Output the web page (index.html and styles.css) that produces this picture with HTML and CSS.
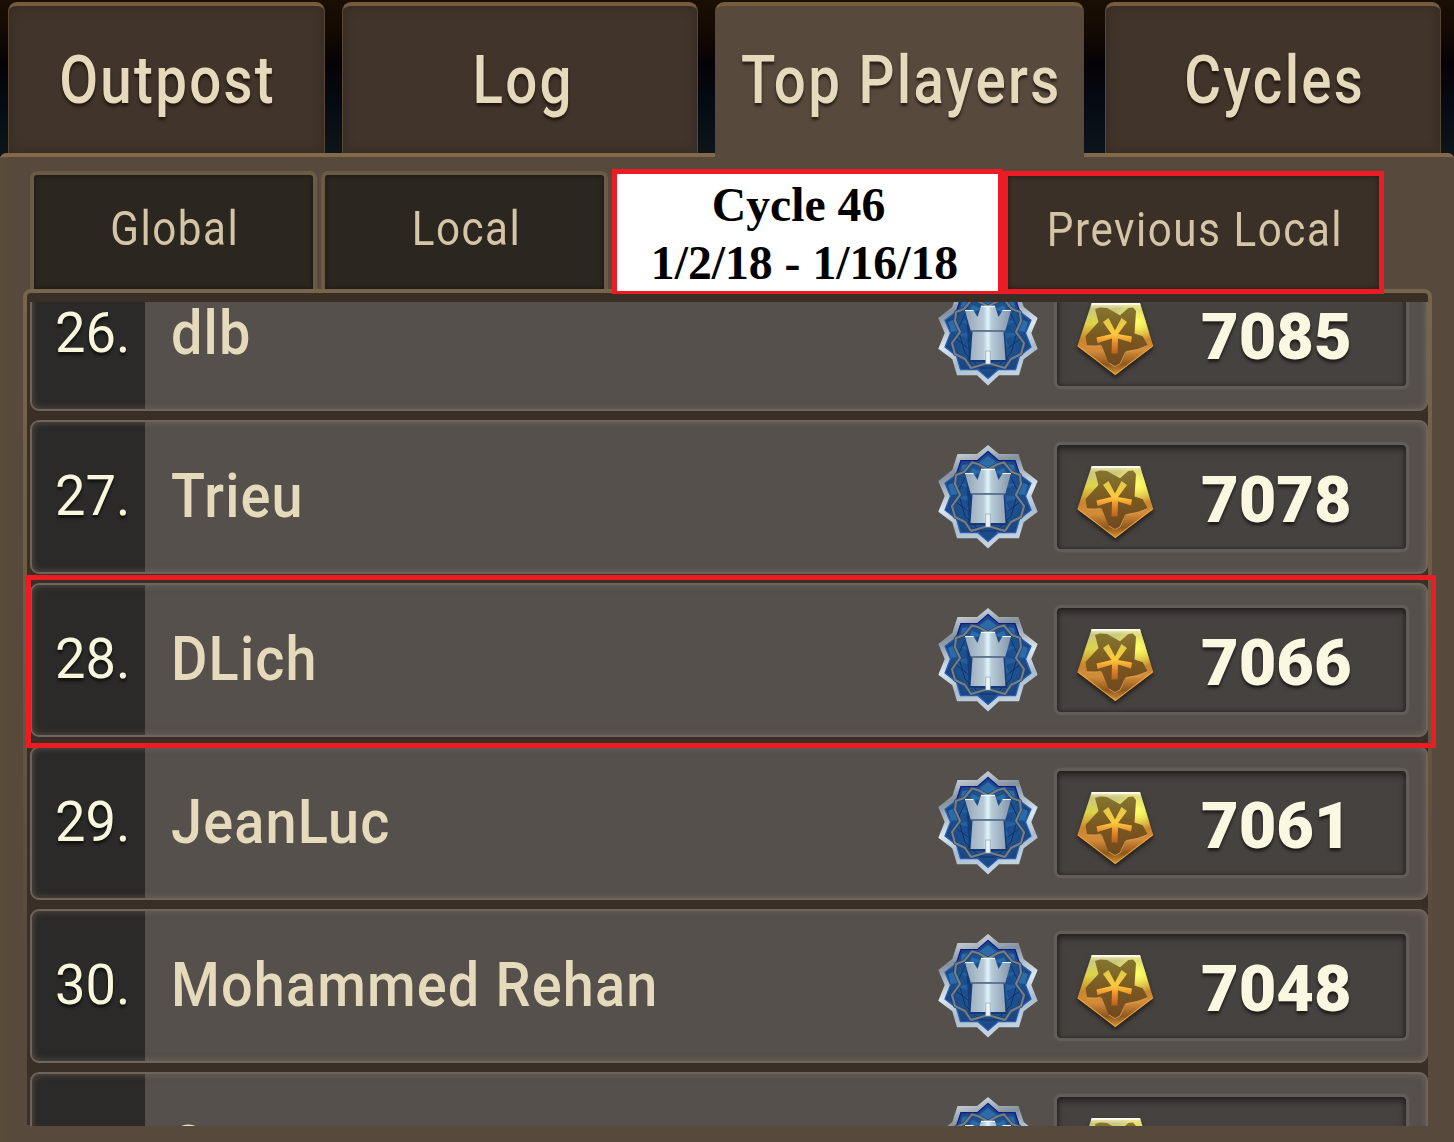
FILE: index.html
```html
<!DOCTYPE html>
<html lang="en">
<head>
  <meta charset="UTF-8">
  <meta name="viewport" content="width=device-width, initial-scale=1.0">
  <title>Top Players</title>
  <link rel="stylesheet" href="styles.css">
</head>
<body>
  <!-- Shared icons -->
  <svg class="icon-defs" width="0" height="0" aria-hidden="true">
    <defs>
      <linearGradient id="steel" x1="0" y1="0" x2="0.25" y2="1">
        <stop offset="0" stop-color="#f2f8fb"/>
        <stop offset="0.3" stop-color="#84929d"/>
        <stop offset="0.6" stop-color="#dce8f0"/>
        <stop offset="0.8" stop-color="#a9bccb"/>
        <stop offset="1" stop-color="#c3d2de"/>
      </linearGradient>
      <radialGradient id="blue" cx="0.5" cy="0.5" r="0.6">
        <stop offset="0" stop-color="#163a80"/>
        <stop offset="0.55" stop-color="#1d5390"/>
        <stop offset="1" stop-color="#183c78"/>
      </radialGradient>
      <linearGradient id="rook" x1="0" y1="0" x2="1" y2="0">
        <stop offset="0" stop-color="#93a4b5"/>
        <stop offset="0.4" stop-color="#b9cad7"/>
        <stop offset="0.5" stop-color="#dff6ff"/>
        <stop offset="0.58" stop-color="#b7cad7"/>
        <stop offset="1" stop-color="#8496aa"/>
      </linearGradient>
      <linearGradient id="gold" x1="0" y1="0" x2="0" y2="1">
        <stop offset="0" stop-color="#f4f1c0"/>
        <stop offset="0.08" stop-color="#cbc680"/>
        <stop offset="0.28" stop-color="#ddd548"/>
        <stop offset="0.5" stop-color="#c9862a"/>
        <stop offset="0.66" stop-color="#d58c3a"/>
        <stop offset="0.85" stop-color="#8e571c"/>
        <stop offset="1" stop-color="#d99a35"/>
      </linearGradient>
      <radialGradient id="shine" cx="0.78" cy="0.25" r="0.3">
        <stop offset="0" stop-color="#ffff6a"/>
        <stop offset="1" stop-color="#ffff6a" stop-opacity="0"/>
      </radialGradient>
      <linearGradient id="leaf" x1="0" y1="0" x2="0" y2="1">
        <stop offset="0" stop-color="#85762f"/>
        <stop offset="0.5" stop-color="#7a5820"/>
        <stop offset="1" stop-color="#71481f"/>
      </linearGradient>
      <linearGradient id="spark" x1="0" y1="0" x2="0" y2="1">
        <stop offset="0" stop-color="#dccb4a"/>
        <stop offset="0.45" stop-color="#ffc93c"/>
        <stop offset="0.7" stop-color="#e88a2c"/>
        <stop offset="1" stop-color="#b8621c"/>
      </linearGradient>
    </defs>
    <symbol id="badge" viewBox="0 0 100 104">
      <path fill="url(#steel)" d="M50 0L61 9H80.500L85.700 25L99.700 36L93.300 51L99.700 66.700L85.700 77.300L81 93.300H61L50 103.500L39 93.300H19L14.300 77.300L.3 66.700L6.700 51L.3 36L14.300 25L19.500 9H39Z"/>
      <path fill="url(#blue)" stroke="#2a5cb8" stroke-width="1.300" d="M50 6.500L60.500 15.700H77L81.500 29.500L93 38.300L87.500 51L93 65L81.500 74L77.500 87.700H60L50 96.500L40 87.700H22.500L18.500 74L7 65L12.500 51L7 38.300L18.500 29.500L23 15.700H39.500Z"/>
      <path fill="none" stroke="#101a86" stroke-width="1.200" d="M18.500 29.500L23 15.700H39.500L50 6.500L60.500 15.700H77L81.500 29.500"/>
      <path fill="#2b6ca8" d="M50 11L59 18L50 23L41 18ZM24 20L33 19L22 31ZM76 20L67 19L78 31ZM10 40L17 37L20 49L13 50ZM90 40L83 37L80 49L87 50ZM34 23L43 27L30 33ZM66 23L57 27L70 33Z"/>
      <path fill="#2f6fae" opacity="0.500" d="M21 39L35 45L33 50L18 52L32 57L28 67L35 62L65 62L72 67L68 57L82 52L67 50L65 45L79 39L62 38H38Z"/>
      <path fill="none" stroke="#122f6c" stroke-width="1" d="M28 30L20 47L27 71L42 86L58 86L73 71L80 47L72 30M30 77L43 72M70 77L57 72M18 57L30 66M82 57L70 66"/>
      <path fill="none" stroke="#2c4264" stroke-width="3.500" stroke-linejoin="round" d="M50 24.500L40 19L34 17.500L26 27L18 30L17 39L22 50L14 61L17 72L27 77L33 86L50 81L67 86L73 77L83 72L86 61L78 50L83 39L82 30L74 27L66 17.500L60 19Z"/>
      <path fill="none" stroke="#727f8c" stroke-width="2.100" stroke-linejoin="round" d="M50 24.500L40 19L34 17.500L26 27L18 30L17 39L22 50L14 61L17 72L27 77L33 86L50 81L67 86L73 77L83 72L86 61L78 50L83 39L82 30L74 27L66 17.500L60 19Z"/>
      <path fill="#12316f" opacity="0.700" d="M28 29L67 50L69 80H31Z"/>
      <path fill="url(#rook)" d="M27 28.500H35.500L39.500 35L43 24.300H57L60.500 35L64.500 28.500H73L67.500 48H32.500ZM34.500 49.500H65.500L67.500 78H32.500Z"/>
      <path stroke="#eff8fc" stroke-width="1.200" fill="none" d="M27 28.500H35.500M43 24.300H57M64.500 28.500H73"/>
      <path stroke="#60758a" stroke-width="1.400" fill="none" d="M32.500 48.800H67.500"/>
      <path fill="#eef5f9" stroke="#8da0b0" stroke-width="0.700" d="M47.700 69H52.300V82H47.700Z"/>
    </symbol>
    <symbol id="gem" viewBox="0 0 77 74">
      <path fill="url(#gold)" d="M14.700 0H63L76.300 43.300L38.300 72.300L.3 43.300Z"/>
      <path fill="url(#shine)" d="M14.700 0H63L76.300 43.300L38.300 72.300L.3 43.300Z"/>
      <path fill="#fff" opacity="0.750" d="M14.700 0H63L63.500 2H14.200Z"/>
      <path fill="none" stroke="#e9aa45" stroke-width="1" d="M1 43L38.300 71.300L75.500 43"/>
      <path fill="url(#leaf)" d="M18 6L23 4.500L30 5L43 12.300L51.300 5L56 4.500L59 8L57.500 30.500L65.700 33.300L70.700 42.300L60 46L49.700 48L43 60.700L38 63.500L31.300 59L24.700 42.500L10 42.300L8.500 33L21.500 19Z"/>
      <path fill="none" stroke="#d09a52" stroke-width="0.900" d="M9 43L18 44L23.500 42M32 60L38 63.500L43 61L48.500 49L61 47L70.700 42.500"/>
      <path fill="url(#spark)" d="M26 19L31.500 15L38 27.500L44.500 15L50 19L41 31L55 33.500L54 39.500L41 35.500L40.500 50.500H34.500L35 35.500L20.500 40L19.500 34.500L34.500 31Z"/>
    </symbol>
  </svg>

  <div class="screen">
    <!-- Main tabs -->
    <nav class="tabs">
      <div class="tab tab-outpost"><span>Outpost</span></div>
      <div class="tab tab-log"><span>Log</span></div>
      <div class="tab tab-players active"><span>Top Players</span></div>
      <div class="tab tab-cycles"><span>Cycles</span></div>
    </nav>

    <main class="panel">
      <!-- Leaderboard filter -->
      <div class="subtabs">
        <div class="subtab"><span>Global</span></div>
        <div class="subtab"><span>Local</span></div>
        <div class="cycle-note">Cycle 46&nbsp;<br>1/2/18 - 1/16/18</div>
        <div class="subtab previous"><span>Previous Local</span></div>
      </div>

      <!-- Player list -->
      <section class="board">
        <div class="list">
          <div class="row">
            <div class="rank">26.</div>
            <div class="name">dlb</div>
            <svg class="badge"><use href="#badge"/></svg>
            <div class="score"><svg class="gem"><use href="#gem"/></svg><span>7085</span></div>
          </div>
          <div class="row">
            <div class="rank">27.</div>
            <div class="name">Trieu</div>
            <svg class="badge"><use href="#badge"/></svg>
            <div class="score"><svg class="gem"><use href="#gem"/></svg><span>7078</span></div>
          </div>
          <div class="row selected">
            <div class="rank">28.</div>
            <div class="name">DLich</div>
            <svg class="badge"><use href="#badge"/></svg>
            <div class="score"><svg class="gem"><use href="#gem"/></svg><span>7066</span></div>
          </div>
          <div class="row">
            <div class="rank">29.</div>
            <div class="name">JeanLuc</div>
            <svg class="badge"><use href="#badge"/></svg>
            <div class="score"><svg class="gem"><use href="#gem"/></svg><span>7061</span></div>
          </div>
          <div class="row">
            <div class="rank">30.</div>
            <div class="name">Mohammed Rehan</div>
            <svg class="badge"><use href="#badge"/></svg>
            <div class="score"><svg class="gem"><use href="#gem"/></svg><span>7048</span></div>
          </div>
          <div class="row">
            <div class="rank">31.</div>
            <div class="name">S</div>
            <svg class="badge"><use href="#badge"/></svg>
            <div class="score"><svg class="gem"><use href="#gem"/></svg><span>7047</span></div>
          </div>
        </div>
      </section>
    </main>
  </div>
</body>
</html>
```
FILE: styles.css
```css
* {
  box-sizing: border-box;
}
body {
  margin: 0;
  background: #574a3d;
  font-family: Roboto, "Liberation Sans", sans-serif;
  color: #e6dabc;
}
.icon-defs {
  position: absolute;
}
.screen {
  width: 1454px;
  height: 1142px;
  overflow: hidden;
  display: flex;
  flex-direction: column;
  background: linear-gradient(#1a0f04 0, #150a03 30px, #060206 62px, #050a12 100px, #0c151a 153px);
}

/* Main tabs */
.tabs {
  display: flex;
  height: 153px;
  padding: 2px 13px 0 8px;
}
.tab {
  display: flex;
  justify-content: center;
  height: 151px;
  border: 1px solid #59482f;
  border-top: 4px solid #765b3d;
  border-bottom: 0;
  border-radius: 9px 9px 0 0;
  background: #40342b;
  box-shadow: inset 0 0 12px rgba(20, 14, 8, 0.25);
  font-size: 66px;
  font-weight: 500;
  letter-spacing: 2.7px;
  line-height: 150px;
  text-shadow: 0 3px 3px rgba(20, 12, 6, 0.7);
  white-space: nowrap;
}
.tab-outpost {
  width: 317px;
  margin-right: 17px;
}
.tab-log {
  width: 356px;
  margin-right: 17px;
  padding-left: 4px;
}
.tab-players {
  width: 369px;
  margin-right: 21px;
}
.tab-cycles {
  width: 336px;
}
.tab.active {
  height: 156px;
  position: relative;
  z-index: 1;
  background: #574a3d;
  box-shadow: none;
}
.tab span {
  padding-left: 3px;
  transform: scaleX(0.855);
}

/* Panel */
.panel {
  height: 989px;
  padding: 12px 22px 0 23px;
  border-top: 4px solid #836849;
  border-radius: 6px 6px 0 0;
  background: #574a3d;
  box-shadow: inset 8px 0 8px -6px rgba(110, 88, 55, 0.35);
}
.subtabs {
  display: flex;
  align-items: flex-start;
  height: 120px;
  padding: 2px 0 0 7px;
}
.subtab {
  display: flex;
  justify-content: center;
  width: 287px;
  height: 118px;
  margin-right: 4px;
  border: 4px solid #6b5b44;
  border-bottom: 0;
  border-radius: 7px 7px 0 0;
  background: #2c2620;
  box-shadow: inset 0 0 5px rgba(10, 8, 5, 0.6);
  color: #d3c5a5;
  font-size: 49px;
  font-weight: 400;
  letter-spacing: 1.8px;
  line-height: 108px;
  white-space: nowrap;
}
.subtab span {
  padding-left: 4px;
  transform: scaleX(0.86);
}
.cycle-note {
  position: relative;
  z-index: 2;
  width: 391px;
  height: 125px;
  margin-top: -2px;
  padding: 2px 6px 0 0;
  border: 5px solid #ed1c24;
  border-bottom-width: 3px;
  background: #fff;
  color: #000;
  font-family: "Liberation Serif", serif;
  font-size: 47.7px;
  font-weight: bold;
  line-height: 58px;
  text-align: center;
  white-space: nowrap;
}
.subtab.previous {
  position: relative;
  z-index: 2;
  width: 381px;
  height: 123px;
  margin-right: 0;
  border: 5px solid #ed1c24;
  border-radius: 0;
  background: #3b3028;
}

/* Player list, the frame fades out towards the bottom */
.board {
  height: 836px;
  padding: 9px 0 0 3px;
  border: 4px solid transparent;
  border-bottom: 0;
  border-radius: 8px 8px 0 0;
  background:
    linear-gradient(#3a2f27, #3a2f27) padding-box,
    linear-gradient(#75664c, #6a5b45 40%, #574a3d 80%) border-box;
}
/* Rows are cut at the top and bottom only */
.list {
  display: flow-root;
  height: 824px;
  width: 1398px;
  clip-path: inset(0 -10px);
}
.row {
  position: relative;
  display: flex;
  align-items: center;
  width: 1398px;
  height: 154px;
  margin-bottom: 9px;
  border-radius: 9px;
  background: linear-gradient(to right, #2b2a28 115px, #55504c 115px);
}
.row:first-child {
  margin-top: -45px;
}
.row::after {
  content: "";
  position: absolute;
  inset: 0;
  border: 2px solid #6f635a;
  border-radius: 9px;
  box-shadow: inset 0 0 7px rgba(140, 122, 108, 0.5);
}
.rank {
  width: 115px;
  padding: 0 0 2px 25px;
  color: #f8f6dc;
  font-size: 56px;
  text-shadow: 0 3px 3px #111;
  transform: scaleX(0.97);
  transform-origin: 25px 0;
}
.name {
  flex: 1;
  padding: 0 0 4px 26px;
  font-size: 62px;
  font-weight: 500;
  letter-spacing: 1.3px;
  transform: scaleX(0.9);
  transform-origin: 26px 0;
  white-space: nowrap;
}
.badge {
  width: 100px;
  height: 104px;
  margin-right: 16px;
}
.score {
  display: flex;
  align-items: center;
  width: 355px;
  height: 110px;
  margin-right: 19px;
  padding-left: 20px;
  border: 3px solid #625d59;
  border-radius: 7px;
  background: #464240;
  box-shadow: inset 0 4px 7px rgba(20, 18, 16, 0.6), inset 0 0 4px rgba(20, 18, 16, 0.6), 0 0 2px #625d59;
}
.gem {
  width: 77px;
  height: 74px;
  margin-top: 11px;
  filter: drop-shadow(0 3px 2px rgba(20, 16, 12, 0.7));
}
.score span {
  margin-left: 47px;
  padding-top: 6px;
  color: #fbf8e2;
  font-size: 65px;
  font-weight: 900;
  text-shadow: 0 3px 3px rgba(20, 18, 16, 0.8);
}
/* Marker around the highlighted player */
.row.selected {
  z-index: 1;
}
.row.selected::before {
  content: "";
  position: absolute;
  z-index: 3;
  inset: -8px -8px -11px -4px;
  border: 5px solid #ed1c24;
}
```
